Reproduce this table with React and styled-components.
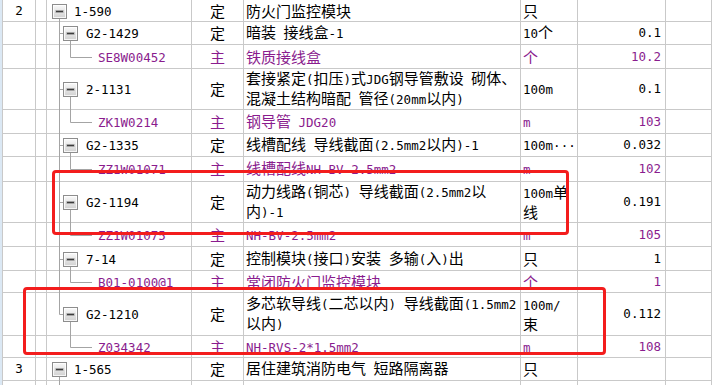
import React from 'react';
import styled, { createGlobalStyle } from 'styled-components';

const LINE = '#c9c9c9';
const TREE = '#a4a4a4';
const PURPLE = '#8a1c8e';

const GlobalStyle = createGlobalStyle`
  html, body {
    margin: 0;
    padding: 0;
    background: #fff;
    overflow: hidden;
  }
  body {
    font-family: "Noto Sans CJK SC", sans-serif;
  }
`;

const Page = styled.div`
  position: relative;
  display: flex;
  width: 712px;
  height: 385px;
  overflow: hidden;
  background: #fff;
`;

const Strip = styled.div`
  width: 2px;
  flex-shrink: 0;
  background: #dbe8f4;
  border-right: 1px solid ${LINE};
`;

const Table = styled.div`
  flex: 1;
  display: flex;
  flex-direction: column;
`;

const Row = styled.div`
  display: grid;
  grid-template-columns: 33px 11px 145px 52px 277px 57px 88px 1fr;
  height: ${(p) => p.$h}px;
  flex-shrink: 0;
  color: ${(p) => (p.$sub ? PURPLE : '#000')};
`;

const Cell = styled.div`
  position: relative;
  box-sizing: border-box;
  display: flex;
  align-items: center;
  justify-content: ${(p) => p.$align || 'flex-start'};
  padding: ${(p) => p.$pad || '0 2px'};
  border-right: 1px solid ${LINE};
  border-bottom: 1px solid ${LINE};
  white-space: nowrap;
  font-size: 15px;
  line-height: 18px;
`;

const Lines = styled.div`
  display: flex;
  flex-direction: column;
`;

const Latin = styled.span`
  font-family: "DejaVu Sans Mono", "Liberation Mono", monospace;
  font-size: 12.5px;
`;

const TreeSvg = styled.svg`
  position: absolute;
  left: 0;
  top: 0;
`;

const Code = styled.span`
  position: relative;
  padding-left: ${(p) => p.$indent}px;
`;

const Mark = styled.div`
  position: absolute;
  left: ${(p) => p.$x}px;
  top: ${(p) => p.$y}px;
  width: ${(p) => p.$w}px;
  height: ${(p) => p.$h}px;
  box-sizing: border-box;
  border: 3px solid #f31d1d;
  border-radius: 4px;
  pointer-events: none;
`;

const rows = [
  { h: 22, idx: '2', level: 0, code: '1-590', kind: '定', desc: ['防火门监控模块'], unit: ['只'], qty: '', kids: true },
  { h: 23, level: 1, code: 'G2-1429', kind: '定', desc: ['暗装 接线盒-1'], unit: ['10个'], qty: '0.1' },
  { h: 24, level: 2, code: 'SE8W00452', kind: '主', desc: ['铁质接线盒'], unit: ['个'], qty: '10.2', sub: true },
  { h: 41, level: 1, code: '2-1131', kind: '定', desc: ['套接紧定(扣压)式JDG钢导管敷设 砌体、', '混凝土结构暗配 管径(20mm以内)'], unit: ['100m'], qty: '0.1' },
  { h: 24, level: 2, code: 'ZK1W0214', kind: '主', desc: ['钢导管 JDG20'], unit: ['m'], qty: '103', sub: true },
  { h: 23, level: 1, code: 'G2-1335', kind: '定', desc: ['线槽配线 导线截面(2.5mm2以内)-1'], unit: ['100m···'], qty: '0.032' },
  { h: 25, level: 2, code: 'ZZ1W01071', kind: '主', desc: ['线槽配线NH-BV-2.5mm2'], unit: ['m'], qty: '102', sub: true },
  { h: 41, level: 1, code: 'G2-1194', kind: '定', desc: ['动力线路(铜芯) 导线截面(2.5mm2以', '内)-1'], unit: ['100m单', '线'], qty: '0.191' },
  { h: 24, level: 2, code: 'ZZ1W01075', kind: '主', desc: ['NH-BV-2.5mm2'], unit: ['m'], qty: '105', sub: true },
  { h: 24, level: 1, code: '7-14', kind: '定', desc: ['控制模块(接口)安装 多输(入)出'], unit: ['只'], qty: '1' },
  { h: 22, level: 2, code: 'B01-0100@1', kind: '主', desc: ['常闭防火门监控模块'], unit: ['个'], qty: '1', sub: true },
  { h: 43, level: 1, code: 'G2-1210', kind: '定', desc: ['多芯软导线(二芯以内) 导线截面(1.5mm2', '以内)'], unit: ['100m/', '束'], qty: '0.112', last: true },
  { h: 22, level: 2, code: 'Z034342', kind: '主', desc: ['NH-RVS-2*1.5mm2'], unit: ['m'], qty: '108', sub: true, last: true },
  { h: 23, idx: '3', level: 0, code: '1-565', kind: '定', desc: ['居住建筑消防电气 短路隔离器'], unit: ['只'], qty: '', kids: true },
  { h: 23, level: -1, code: '', kind: '', desc: [''], unit: [''], qty: '' },
];

const indents = { 0: 27, 1: 39, 2: 51 };

function mixed(text) {
  return text.split(/([\x00-\xff]+)/).map((part, i) =>
    /^[\x00-\xff]+$/.test(part) ? <Latin key={i}>{part}</Latin> : part
  );
}

function Expander({ x, y }) {
  return (
    <g>
      <rect x={x + 0.5} y={y + 0.5} width="14" height="14" fill="url(#btn)" stroke="#8d8d8d" />
      <rect x={x + 1.5} y={y + 1.5} width="12" height="12" fill="none" stroke="#ffffff" strokeOpacity="0.8" />
      <rect x={x + 4} y={y + 6.5} width="7" height="2" fill="#3c3c3c" />
    </g>
  );
}

function Tree({ row, prev }) {
  const h = row.h - 1;
  const mid = Math.round(h / 2);
  const by = mid - 7;
  const A = 12.5;
  const B = 23.5;
  const parts = [];

  if (row.level === 0) {
    parts.push(<Expander key="e" x={5} y={by} />);
    if (row.kids) parts.push(<line key="a" x1={A} y1={by + 15} x2={A} y2={row.h} />);
  }
  if (row.level === 1) {
    parts.push(<line key="a" x1={A} y1={0} x2={A} y2={row.last ? mid + 0.5 : row.h} />);
    parts.push(<line key="h" x1={A} y1={mid + 0.5} x2={16} y2={mid + 0.5} />);
    parts.push(<line key="b" x1={B} y1={by + 15} x2={B} y2={row.h} />);
    parts.push(<Expander key="e" x={16} y={by} />);
  }
  if (row.level === 2) {
    if (!row.last) parts.push(<line key="a" x1={A} y1={0} x2={A} y2={row.h} />);
    parts.push(<line key="b" x1={B} y1={0} x2={B} y2={mid + 0.5} />);
    parts.push(<line key="h" x1={B} y1={mid + 0.5} x2={45} y2={mid + 0.5} />);
  }
  if (row.level === -1 && prev && prev.kids) {
    parts.push(<line key="a" x1={A} y1={0} x2={A} y2={row.h} />);
  }

  return (
    <TreeSvg width="145" height={row.h}>
      <defs>
        <linearGradient id="btn" x1="0" y1="0" x2="0" y2="1">
          <stop offset="0" stopColor="#fbfbfb" />
          <stop offset="1" stopColor="#cfcfcf" />
        </linearGradient>
      </defs>
      <g stroke={TREE} strokeWidth="1" fill="none">{parts}</g>
    </TreeSvg>
  );
}

function TextLines({ lines }) {
  return (
    <Lines>
      {lines.map((l, i) => (
        <span key={i}>{mixed(l)}</span>
      ))}
    </Lines>
  );
}

export default function App() {
  return (
    <Page>
      <GlobalStyle />
      <Strip />
      <Table>
        {rows.map((row, i) => (
          <Row key={i} $h={row.h} $sub={row.sub}>
            <Cell $align="center" $pad="0">
              {row.idx ? mixed(row.idx) : null}
            </Cell>
            <Cell $pad="0" />
            <Cell $pad="0">
              <Tree row={row} prev={rows[i - 1]} />
              {row.code ? <Code $indent={indents[row.level]}>{mixed(row.code)}</Code> : null}
            </Cell>
            <Cell $align="center" $pad="0">{row.kind}</Cell>
            <Cell>
              <TextLines lines={row.desc} />
            </Cell>
            <Cell>
              <TextLines lines={row.unit} />
            </Cell>
            <Cell $align="flex-end" $pad="0 4px 0 0">
              {row.qty ? mixed(row.qty) : null}
            </Cell>
            <Cell />
          </Row>
        ))}
      </Table>
      <Mark $x={52} $y={170} $w={517} $h={65} />
      <Mark $x={23} $y={287} $w={583} $h={68} />
    </Page>
  );
}
